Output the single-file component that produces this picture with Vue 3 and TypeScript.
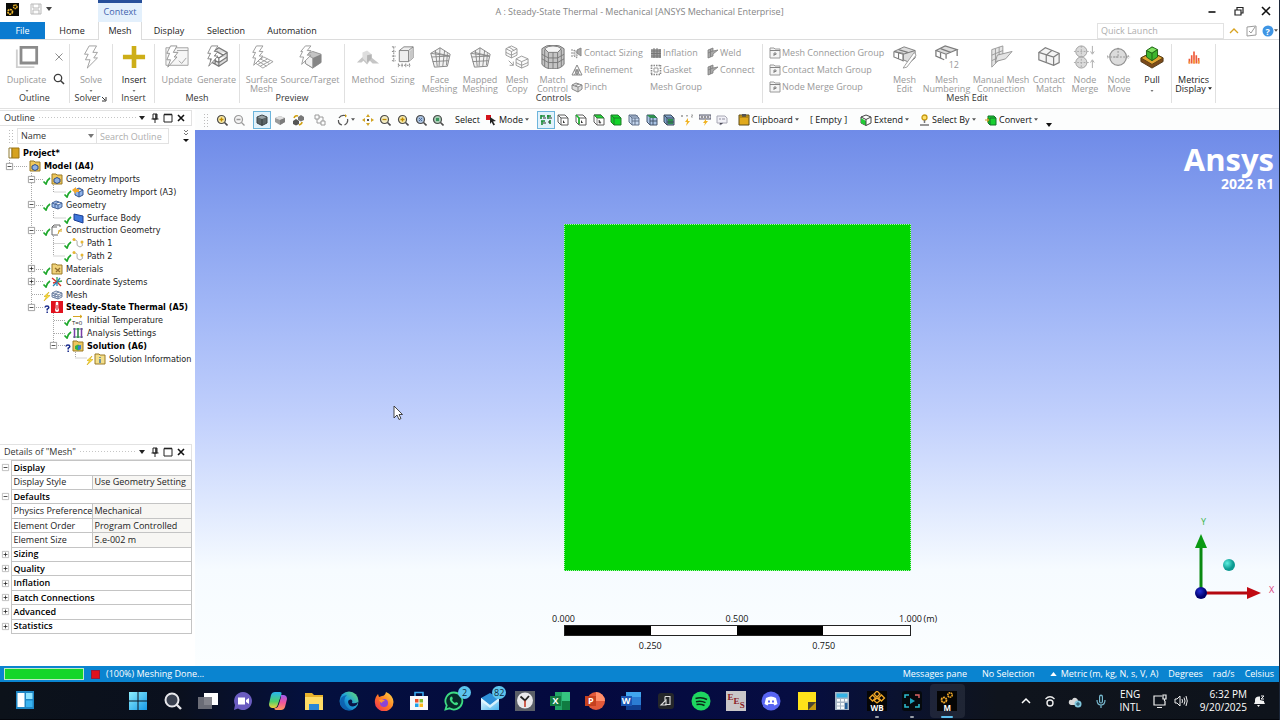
<script setup lang="ts">
import { ref } from 'vue'

interface Tool { label: string; icon: string; live?: boolean; drop?: boolean; mark?: string }
interface TreeRow { label: string; level: number; icon: string; status?: string; open?: string; bold?: boolean; mark?: string }
interface DetailRow { kind: 'group' | 'prop'; name: string; value?: string; open?: boolean }
interface AppItem { name: string; icon: string; badge?: string; run?: string; letter?: string; look?: string }

const tabs = ['Home', 'Mesh', 'Display', 'Selection', 'Automation']
const activeTab = ref('Mesh')

const meshTools: Tool[] = [
  { label: 'Update', icon: 'update' },
  { label: 'Generate', icon: 'generate' },
]
const previewTools: Tool[] = [
  { label: 'Surface\nMesh', icon: 'surface' },
  { label: 'Source/Target', icon: 'srctgt' },
]
const controlTools: Tool[] = [
  { label: 'Method', icon: 'method' },
  { label: 'Sizing', icon: 'sizing' },
  { label: 'Face\nMeshing', icon: 'facemesh' },
  { label: 'Mapped\nMeshing', icon: 'facemesh' },
  { label: 'Mesh\nCopy', icon: 'meshcopy' },
  { label: 'Match\nControl', icon: 'match' },
]
const controlColumns: Tool[][] = [
  [
    { label: 'Contact Sizing', icon: 's-contact' },
    { label: 'Refinement', icon: 's-refine' },
    { label: 'Pinch', icon: 's-pinch' },
  ],
  [
    { label: 'Inflation', icon: 's-inflate' },
    { label: 'Gasket', icon: 's-gasket' },
    { label: 'Mesh Group', icon: '' },
  ],
  [
    { label: 'Weld', icon: 's-weld' },
    { label: 'Connect', icon: 's-weld' },
  ],
]
const groupTools: Tool[] = [
  { label: 'Mesh Connection Group', icon: 's-group' },
  { label: 'Contact Match Group', icon: 's-group' },
  { label: 'Node Merge Group', icon: 's-group' },
]
const editTools: Tool[] = [
  { label: 'Mesh\nEdit', icon: 'meshedit' },
  { label: 'Mesh\nNumbering', icon: 'meshnum', mark: '12' },
  { label: 'Manual Mesh\nConnection', icon: 'manual' },
  { label: 'Contact\nMatch', icon: 'contactmatch' },
  { label: 'Node\nMerge', icon: 'nodemerge' },
  { label: 'Node\nMove', icon: 'nodemove' },
  { label: 'Pull', icon: 'pull', live: true, drop: true },
]

const tree: TreeRow[] = [
  { label: 'Project*', level: 0, icon: 't-project', bold: true },
  { label: 'Model (A4)', level: 1, icon: 't-model', open: 'minus', bold: true },
  { label: 'Geometry Imports', level: 2, icon: 't-model', status: 't-check', open: 'minus' },
  { label: 'Geometry Import (A3)', level: 3, icon: 't-import', status: 't-check' },
  { label: 'Geometry', level: 2, icon: 't-geometry', status: 't-check', open: 'minus' },
  { label: 'Surface Body', level: 3, icon: 't-surface', status: 't-check' },
  { label: 'Construction Geometry', level: 2, icon: 't-construct', status: 't-check', open: 'minus' },
  { label: 'Path 1', level: 3, icon: 't-path', status: 't-check' },
  { label: 'Path 2', level: 3, icon: 't-path', status: 't-check' },
  { label: 'Materials', level: 2, icon: 't-materials', status: 't-check', open: 'plus' },
  { label: 'Coordinate Systems', level: 2, icon: 't-coords', status: 't-check', open: 'plus' },
  { label: 'Mesh', level: 2, icon: 't-mesh', status: 't-bolt' },
  { label: 'Steady-State Thermal (A5)', level: 2, icon: 't-thermal', status: 't-question', open: 'minus', bold: true },
  { label: 'Initial Temperature', level: 3, icon: 't-initial', status: 't-check', mark: 'T=0' },
  { label: 'Analysis Settings', level: 3, icon: 't-settings', status: 't-check' },
  { label: 'Solution (A6)', level: 3, icon: 't-solution', status: 't-question', open: 'minus', bold: true },
  { label: 'Solution Information', level: 4, icon: 't-info', status: 't-bolt' },
]

const details: DetailRow[] = [
  { kind: 'group', name: 'Display', open: true },
  { kind: 'prop', name: 'Display Style', value: 'Use Geometry Setting' },
  { kind: 'group', name: 'Defaults', open: true },
  { kind: 'prop', name: 'Physics Preference', value: 'Mechanical' },
  { kind: 'prop', name: 'Element Order', value: 'Program Controlled' },
  { kind: 'prop', name: 'Element Size', value: '5.e-002 m' },
  { kind: 'group', name: 'Sizing' },
  { kind: 'group', name: 'Quality' },
  { kind: 'group', name: 'Inflation' },
  { kind: 'group', name: 'Batch Connections' },
  { kind: 'group', name: 'Advanced' },
  { kind: 'group', name: 'Statistics' },
]

const shading = [
  { name: 'Shaded with edges', icon: 'v-cube-dark', on: true },
  { name: 'Shaded', icon: 'v-cube-grey', on: false },
  { name: 'Views', icon: 'v-views', on: false },
]
const zooms = [
  { name: 'Pan', icon: 'v-pan' },
  { name: 'Zoom', icon: 'v-zoom' },
  { name: 'Box zoom', icon: 'v-zoomin' },
  { name: 'Zoom to fit', icon: 'v-zoomfit' },
  { name: 'Zoom to selection', icon: 'v-zoomsel' },
]
const filters = [
  { name: 'Smart select', icon: 'v-smart', on: true },
  { name: 'Vertex', icon: 'v-vertex', on: false },
  { name: 'Edge', icon: 'v-edge', on: false },
  { name: 'Face', icon: 'v-face', on: false },
  { name: 'Body', icon: 'v-body', on: false },
  { name: 'Node', icon: 'v-node', on: false },
  { name: 'Element face', icon: 'v-elface', on: false },
  { name: 'Element', icon: 'v-element', on: false },
  { name: 'Coordinates', icon: 'v-xyz', on: false },
  { name: 'Probe', icon: 'v-probe', on: false },
  { name: 'Annotation', icon: 'v-label', on: false },
]

const apps: AppItem[] = [
  { name: 'Start', icon: 'a-start' }, { name: 'Search', icon: 'a-search' },
  { name: 'Task view', icon: 'a-tasks' }, { name: 'Chat', icon: 'a-chat' },
  { name: 'Copilot', icon: 'a-copilot' }, { name: 'File Explorer', icon: 'a-folder' },
  { name: 'Edge', icon: 'a-edge' }, { name: 'Firefox', icon: 'a-firefox' },
  { name: 'Store', icon: 'a-store' }, { name: 'WhatsApp', icon: 'a-whatsapp', badge: '2' },
  { name: 'Mail', icon: 'a-mail', badge: '82' }, { name: 'Clock', icon: 'a-clock' },
  { name: 'Excel', icon: 'a-excel', letter: 'X', look: 'office' },
  { name: 'PowerPoint', icon: 'a-ppt', letter: 'P', look: 'office' },
  { name: 'Word', icon: 'a-word', letter: 'W', look: 'office' },
  { name: 'Inventor', icon: 'a-dark' },
  { name: 'Spotify', icon: 'a-spotify' },
  { name: 'EES', icon: 'a-ees', letter: 'EES', look: 'stairs' },
  { name: 'Discord', icon: 'a-discord' }, { name: 'Sticky Notes', icon: 'a-sticky' },
  { name: 'Calculator', icon: 'a-calc' },
  { name: 'Workbench', icon: 'a-wb', run: 'idle', letter: 'WB', look: 'foot' },
  { name: 'Recorder', icon: 'a-rec', run: 'idle' },
  { name: 'Mechanical', icon: 'a-mech', run: 'current', letter: 'M', look: 'foot' },
]
</script>

<template>
  <div class="desktop">
    <svg class="sprite" aria-hidden="true">
      <defs>
        <radialGradient id="gBlue" cx=".4" cy=".35"><stop offset="0" stop-color="#2430d8" /><stop offset="1" stop-color="#00006c" /></radialGradient>
        <radialGradient id="gTeal" cx=".35" cy=".35"><stop offset="0" stop-color="#5ff0e0" /><stop offset="1" stop-color="#0c9a92" /></radialGradient>
        <linearGradient id="gWin" x1="0" y1="0" x2="1" y2="1"><stop offset="0" stop-color="#8ff0ff" /><stop offset="1" stop-color="#1598e6" /></linearGradient>
        <linearGradient id="gEdge" x1="0" y1="1" x2="1" y2="0"><stop offset="0" stop-color="#0c59a4" /><stop offset=".5" stop-color="#1ea0dc" /><stop offset="1" stop-color="#6be06a" /></linearGradient>
        <linearGradient id="gFox" x1="1" y1="0" x2="0" y2="1"><stop offset="0" stop-color="#ffe14a" /><stop offset=".5" stop-color="#ff7b22" /><stop offset="1" stop-color="#f0255c" /></linearGradient>
        <linearGradient id="gMail" x1="0" y1="0" x2="1" y2="1"><stop offset="0" stop-color="#f2fbff" /><stop offset="1" stop-color="#48b4ee" /></linearGradient>
        <linearGradient id="gCopL" x1="0" y1="0" x2="0" y2="1"><stop offset="0" stop-color="#27b6f0" /><stop offset=".6" stop-color="#4fd06a" /><stop offset="1" stop-color="#f5d13a" /></linearGradient>
        <linearGradient id="gCopR" x1="0" y1="0" x2="0" y2="1"><stop offset="0" stop-color="#9b5cf0" /><stop offset=".5" stop-color="#f0569c" /><stop offset="1" stop-color="#ff9a5a" /></linearGradient>
      </defs>

      <symbol id="duplicate" viewBox="0 0 26 26"><path d="M2 5v19h19" fill="none" stroke="#cfcfcf" stroke-width="2" /><path d="M6.500 2.500h17v17h-17z" fill="#fff" stroke="#8b8b8b" stroke-width="3" /></symbol>
      <symbol id="bolt" viewBox="0 0 26 26"><path d="M11 1h8l-4 7h5l-4 6h4L9 25l3-9H7l3-6H6z" fill="#fff" stroke="#9c9c9c" /></symbol>
      <symbol id="insert" viewBox="0 0 26 26"><path d="M10.500 1h5v9.500H25v5h-9.500V25h-5v-9.500H1v-5h9.500z" fill="#cdae18" /></symbol>
      <symbol id="update" viewBox="0 0 26 26"><path d="M1 3h24v19H1z" fill="#f6f6f6" stroke="#a0a0a0" /><path d="M13 6h12M15 17l3 3 5-6" fill="none" stroke="#a0a0a0" /><path d="M6 1h7L9 8h5l-4 5h3L3 24l3-8H2l3-7H2z" fill="#fff" stroke="#909090" /></symbol>
      <symbol id="generate" viewBox="0 0 26 26"><path d="M6 9l9-6 9 5v9l-9 6-9-5zM6 9l9 5 9-6M15 14v9M10 6l10 5M6 14l9 5 9-6M11 11v9" fill="#ddd" stroke="#777" stroke-width="1.300" /><path d="M7 1h7l-4 6h4l-4 5h4L4 23l3-8H3l3-6H3z" fill="#fff" stroke="#858585" /></symbol>
      <symbol id="surface" viewBox="0 0 26 26"><path d="M5 19l10-6 10 5-11 7zM8 17l10 6M11 15l10 5M8.500 21L19 15M11 23l11-6" fill="#fff" stroke="#9c9c9c" /><path d="M7 1h7l-4 6h4l-4 5h4L4 22l2-8H3l3-6H3z" fill="#fff" stroke="#989898" /></symbol>
      <symbol id="srctgt" viewBox="0 0 26 26"><path d="M8 10l8-3 9 3v9l-9 6-8-5z" fill="#c4c4c4" stroke="#8f8f8f" /><path d="M16 14l9-4v9l-9 6z" fill="#858585" /><path d="M8 10l8 4v11l-8-5z" fill="#f1f1f1" stroke="#8f8f8f" /><path d="M8 1h6l-4 5h4l-4 5h4L4 21l2-8H2l3-6H3z" fill="#fff" stroke="#989898" /></symbol>
      <symbol id="method" viewBox="0 0 26 26"><path d="M1 19l6-6 5 5 4-5 9 7h-7l-3-3-3 4-4-4-2 2z" fill="#c6c6c6" /><path d="M7 8l5-2 5 4v5l-5 4-5-5z" fill="#dedede" /><path d="M12 11l5-1v5l-5 4z" fill="#b4b4b4" /></symbol>
      <symbol id="sizing" viewBox="0 0 26 26"><path d="M9 6l5-4h10v12l-5 4H9z" fill="#eee" stroke="#808080" /><path d="M20 7l4-4v11l-4 3z" fill="#c8c8c8" /><path d="M9 6h10v12M19 6l5-4" fill="none" stroke="#808080" /><path d="M3 2v16M1 2h4M1 7h4M1 12h4M1 17h4M8 22h13M8 20v4M12 20v4M16 20v4M20 20v4" fill="none" stroke="#808080" stroke-dasharray="2 1" /></symbol>
      <symbol id="facemesh" viewBox="0 0 26 26"><path d="M13 3l11 7-3 13-14 1L3 9z" fill="#f2f2f2" stroke="#808080" /><path d="M4 13l19-1M5 18l17-1M7 8l16 4M13 3l-1 20M8 6l2 17M18 6l-2 17M21 9l-1 13M3 9l20 3" fill="none" stroke="#888" /></symbol>
      <symbol id="meshcopy" viewBox="0 0 26 26"><g fill="#fafafa" stroke="#989898"><path d="M1 4l6-3 6 3v7l-6 3-6-3zM1 4l6 3 6-3M7 7v7M1 8l6 3 6-3M4 2l6 4" /><path d="M12 15l6-3 7 3v7l-7 3-6-3zM12 15l6 3 7-3M18 18v7M12 19l6 3 7-3" /><path d="M4 17l5 5M9 18v4H5" fill="none" /></g></symbol>
      <symbol id="match" viewBox="0 0 26 26"><path d="M1 4q4-4 12-4t12 4v17q-4 5-12 5T1 21z" fill="#c4c4c4" stroke="#6e6e6e" /><path d="M4 4q3-3 9-3t9 3l-4 4H8z" fill="#f5f5f5" stroke="#777" /><path d="M8 8v17M18 8v17M13 8v18M4 5v18M22 5v18M1 10l7 4h10l7-4M1 15l7 4h10l7-4" fill="none" stroke="#777" /></symbol>
      <symbol id="meshedit" viewBox="0 0 26 26"><path d="M1 7l11-5 12 4v8l-6 5-7-3V9z" fill="#ddd" stroke="#7c7c7c" /><path d="M1 7l10 3 13-4M11 10v8M1 7v6l10 4M6 5l10 3M6 8v7" fill="none" stroke="#7c7c7c" stroke-width="1.200" /><path d="M23 8L13 22l-2 3 4-1L25 11z" fill="#fff" stroke="#9a9a9a" /></symbol>
      <symbol id="meshnum" viewBox="0 0 26 26"><path d="M1 6l10-5 13 4-12 5z" fill="#ddd" stroke="#7c7c7c" stroke-width="1.200" /><path d="M1 6v6l9 4M6 8v6M12 10v5M24 5v7M6 4l11 4" fill="none" stroke="#7c7c7c" stroke-width="1.400" /></symbol>
      <symbol id="manual" viewBox="0 0 26 26"><path d="M3 5l12-4v11L3 24zM3 11l12-5M3 17l12-6M7 4v16M11 2v14" fill="#e4e4e4" stroke="#989898" /><path d="M9 11l16-4-7 8-11 3z" fill="#e4e4e4" stroke="#939393" /></symbol>
      <symbol id="contactmatch" viewBox="0 0 26 26"><path d="M2 8l7-5 15 6v10l-6 3-16-6z" fill="#f4f4f4" stroke="#7f7f7f" stroke-width="1.300" /><path d="M2 8l16 5 6-4M18 13v9M10 11v8M10 11l6-5" fill="none" stroke="#7f7f7f" stroke-width="1.300" /></symbol>
      <symbol id="nodemerge" viewBox="0 0 26 26"><g fill="#dadada" stroke="#9c9c9c"><circle cx="9" cy="7" r="6" /><circle cx="9" cy="19" r="6" /></g><path d="M1 7h16M1 19h16M9 1v24" stroke="#a8a8a8" stroke-dasharray="2 1.500" /><path d="M21 1v8M19 7l2 3 2-3M21 25v-8M19 19l2-3 2 3" fill="none" stroke="#a8a8a8" /></symbol>
      <symbol id="nodemove" viewBox="0 0 26 26"><circle cx="12" cy="13" r="9" fill="#dcdcdc" stroke="#8f8f8f" stroke-width="1.300" /><path d="M0 13h25M12 3v10h-5M23 11v4M0 11v4" fill="none" stroke="#8f8f8f" stroke-dasharray="2 1.500" /></symbol>
      <symbol id="pull" viewBox="0 0 26 26"><path d="M1 14l12-6 12 6v4l-12 7-12-7z" fill="#7c4a1a" stroke="#4b3312" /><path d="M1 14l12-6 12 6-12 7z" fill="#e0a532" stroke="#5a3d10" /><path d="M7 6l6-4 6 3v8l-6 4-6-4z" fill="#3eb52e" stroke="#205c16" /><path d="M8 6l5-3 5 2-5 3z" fill="#82e063" /><path d="M7 6l6 3 6-4M13 9v8" fill="none" stroke="#205c16" /></symbol>
      <symbol id="metrics" viewBox="0 0 26 26"><path d="M8 20v-5M10.500 20v-9M13 20V7M15.500 20v-9M18 20v-6" stroke="#ee5a3a" stroke-width="1.800" /><path d="M8 20v-2M13 20v-4M18 20v-3" stroke="#f3a13c" stroke-width="1.800" /></symbol>

      <symbol id="s-contact" viewBox="0 0 12 12"><path d="M1 2v8M3 3l3 2v6l-3-2z" fill="#ddd" stroke="#8c8c8c" stroke-dasharray="2 1" /><path d="M6 3l4-2v8l-4-3z" fill="#aaa" stroke="#888" /></symbol>
      <symbol id="s-refine" viewBox="0 0 12 12"><path d="M6 1l5 10H1zM6 5v6M3.500 6L6 11 8.500 6zM3.500 11L6 6l2.500 5" fill="none" stroke="#888" /></symbol>
      <symbol id="s-pinch" viewBox="0 0 12 12"><path d="M1 4l4-2 6 2v4l-4 3-6-3zM1 4l6 2 4-2M7 6v5M4 5l4-2" fill="#ddd" stroke="#888" /></symbol>
      <symbol id="s-inflate" viewBox="0 0 12 12"><path d="M1 2h10v9H1z" fill="#a4a4a4" /><path d="M1 4h10M1 6.500h10M1 9h10M4 1v10M7 1v10M10 2v9" stroke="#777" /></symbol>
      <symbol id="s-gasket" viewBox="0 0 12 12"><path d="M1 1.500h10M1 10.500h10M1.500 1v10M10.500 1v10" stroke="#888" stroke-width="1.600" stroke-dasharray="1.500 1" /><path d="M4 4h4v4H4z" fill="none" stroke="#999" /></symbol>
      <symbol id="s-weld" viewBox="0 0 12 12"><path d="M1 3l5-2v3l5-1-5 4v2l-5 2z" fill="#a8a8a8" stroke="#7e7e7e" stroke-width=".8" /><path d="M1 6l5-2M3.500 2v8" stroke="#7e7e7e" stroke-width=".8" /></symbol>
      <symbol id="s-group" viewBox="0 0 12 12"><path d="M1 3V1h4l1 1h5v9H1z" fill="#f5f5f5" stroke="#9a9a9a" /><path d="M1 3.500h10M5 9V6h2v1.500H5" fill="none" stroke="#858585" /></symbol>
      <symbol id="s-cross" viewBox="0 0 12 12"><path d="M2.500 2.500l7 7M9.500 2.500l-7 7" stroke="#8f8f8f" /></symbol>
      <symbol id="s-search" viewBox="0 0 12 12"><circle cx="5" cy="5" r="3.700" fill="none" stroke="#3d3d3d" stroke-width="1.300" /><path d="M7.700 7.700L11 11" stroke="#3d3d3d" stroke-width="1.600" /></symbol>

      <symbol id="caret" viewBox="0 0 6 4"><path d="M0 0h6L3 4z" fill="currentColor" /></symbol>
      <symbol id="pin" viewBox="0 0 10 10"><path d="M3 1h4v5H3zM1.500 6h7M5 6v4" fill="none" stroke="#222" /><path d="M6 1v5" stroke="#222" stroke-width="1.600" /></symbol>
      <symbol id="max" viewBox="0 0 10 10"><path d="M1 1.500h8v7.500H1z" fill="none" stroke="#222" /><path d="M1 1.500h8" stroke="#222" stroke-width="1.600" /></symbol>
      <symbol id="close" viewBox="0 0 10 10"><path d="M2 2l6 6M8 2L2 8" stroke="#111" stroke-width="1.600" /></symbol>
      <symbol id="gears" viewBox="0 0 14 14"><path d="M0 0h14v14H0z" fill="#0a0a06" /><circle cx="4.500" cy="9.500" r="2.500" fill="none" stroke="#f0b92c" stroke-width="1.800" stroke-dasharray="2 .6" /><circle cx="10" cy="4" r="1.900" fill="none" stroke="#f0b92c" stroke-width="1.600" stroke-dasharray="1.500 .5" /></symbol>
      <symbol id="save" viewBox="0 0 12 12"><path d="M1 1h10v10H1zM3 1v4h6V1M3 11V7h6v4" fill="#fbfbfb" stroke="#b9b9b9" /></symbol>

      <symbol id="t-check" viewBox="0 0 9 10"><path d="M1.500 6.500L4 9q1-4 4-6" fill="none" stroke="#1fa82c" stroke-width="1.700" /></symbol>
      <symbol id="t-bolt" viewBox="0 0 9 10"><path d="M7 1L2 5.500h2.500L2 10l6-5.500H5z" fill="#ffe23a" stroke="#d2aa10" stroke-width=".6" /></symbol>
      <symbol id="t-question" viewBox="0 0 9 10"><path d="M3 4.500q.2-1.500 2-1.500t1.800 1.500q0 .8-1.600 1.700v1.200M5.200 8.500V10" fill="none" stroke="#1a2c8c" stroke-width="1.500" /></symbol>
      <symbol id="t-project" viewBox="0 0 12 12"><path d="M1 1h3v10H1z" fill="#fff" stroke="#8f7a33" /><path d="M4 1h7v10H4z" fill="#d6a21f" stroke="#9c7413" /></symbol>
      <symbol id="t-model" viewBox="0 0 12 12"><path d="M1 1h4l1 1h5v9H1z" fill="#eec75c" stroke="#9a7a26" /><path d="M3 6l3-1.500L9 6v3l-3 1.500L3 9z" fill="#8fb1e4" stroke="#2f4d86" /></symbol>
      <symbol id="t-import" viewBox="0 0 12 12"><path d="M3 4l4-2 4 2v5l-4 2-4-2zM3 4l4 2 4-2M7 6v5" fill="#8fb3ea" stroke="#34548e" /><path d="M0 4l4-3v2h3v3H4v2z" fill="#f2a92e" /></symbol>
      <symbol id="t-geometry" viewBox="0 0 12 12"><path d="M1 4l4-2 6 2v4l-4 2-6-2zM1 4l6 2 4-2M7 6v4M4 5l4-2M4 5v4" fill="#9cbcec" stroke="#3c5b93" stroke-width=".9" /></symbol>
      <symbol id="t-surface" viewBox="0 0 12 12"><path d="M2 2l9 2v7L2 8z" fill="#3f78dc" stroke="#1a3d92" /></symbol>
      <symbol id="t-construct" viewBox="0 0 12 12"><path d="M1 3l2-2h6v2M1 3v8h6M1 3h5" fill="none" stroke="#666" /><path d="M7 10q1-5 4-5M7 7h4" fill="none" stroke="#d5a520" /></symbol>
      <symbol id="t-path" viewBox="0 0 12 12"><path d="M2 3q4 0 3 3t3 4q4-1 2-4" fill="none" stroke="#aaa" /><circle cx="2" cy="2.500" r="1.500" fill="#e6b735" /><circle cx="10" cy="5" r="1.500" fill="#e6b735" /></symbol>
      <symbol id="t-materials" viewBox="0 0 12 12"><path d="M1 1h4l1 1h5v9H1z" fill="#f0d27a" stroke="#9a7a26" /><path d="M4 5l5 4M9 5L5 9" stroke="#927030" stroke-width="1.300" /></symbol>
      <symbol id="t-coords" viewBox="0 0 12 12"><path d="M6 6V1M6 6l5-1" stroke="#37a047" stroke-width="1.300" /><path d="M6 6L1 2M6 6l4 4M2 7l4-1" stroke="#d8332c" stroke-width="1.300" /><path d="M6 6l-4 4M6 6v4M6 6l3-4" stroke="#2787b8" stroke-width="1.300" /></symbol>
      <symbol id="t-mesh" viewBox="0 0 12 12"><path d="M1 4l4-2 6 2v4l-4 2-6-2zM1 4l6 2 4-2M7 6v4M4 5l4-2M4 5v4M1 6l6 2 4-2" fill="#dfe7f2" stroke="#62779a" stroke-width=".9" /></symbol>
      <symbol id="t-thermal" viewBox="0 0 12 12"><path d="M0 0h12v12H0z" fill="#e0121e" /><path d="M6 2v6" stroke="#fff" stroke-width="2.600" stroke-linecap="round" /><circle cx="6" cy="9" r="2" fill="#fff" /><path d="M6 4v5" stroke="#c00010" /></symbol>
      <symbol id="t-initial" viewBox="0 0 12 12"><path d="M1 2.500h9M8 1l2 1.500L8 4" fill="none" stroke="#d5a520" /></symbol>
      <symbol id="t-settings" viewBox="0 0 12 12"><path d="M1 2h10M1 10h10" stroke="#2f9e50" /><path d="M2.500 1v10M9.500 1v10" stroke="#7a3fa8" stroke-width="1.500" /><path d="M6 1v10" stroke="#267b3e" stroke-width="1.500" /></symbol>
      <symbol id="t-solution" viewBox="0 0 12 12"><path d="M1 1h4l1 1h5v9H1z" fill="#eec75c" stroke="#9a7a26" /><path d="M3 6l3-1.500L9 6v3l-3 1.500L3 9z" fill="#2fb04a" /><path d="M6 6l3-1v4l-3 1z" fill="#3678d4" /></symbol>
      <symbol id="t-info" viewBox="0 0 12 12"><path d="M1 1h4l1 1h5v9H1z" fill="#f4df8a" stroke="#9a7a26" /><path d="M6 4v1M6 6v4" stroke="#2c6db0" stroke-width="1.300" /></symbol>

      <symbol id="v-zoom" viewBox="0 0 12 12"><circle cx="5.500" cy="5.500" r="4" fill="#f3ecc2" stroke="#4c4c4c" stroke-width="1.200" /><path d="M3.500 5.500h4" stroke="#c08c00" stroke-width="1.300" /><path d="M8.500 8.500l3 3" stroke="#4c4c4c" stroke-width="1.600" /></symbol>
      <symbol id="v-zoomin" viewBox="0 0 12 12"><circle cx="5.500" cy="5.500" r="4" fill="#f7e9a6" stroke="#4c4c4c" stroke-width="1.200" /><path d="M3.500 5.500h4M5.500 3.500v4" stroke="#c08c00" stroke-width="1.300" /><path d="M8.500 8.500l3 3" stroke="#4c4c4c" stroke-width="1.600" /></symbol>
      <symbol id="v-zoomout" viewBox="0 0 12 12"><circle cx="5.500" cy="5.500" r="4" fill="#f4f4f4" stroke="#9a9a9a" stroke-width="1.200" /><path d="M3.500 5.500h4M8.500 8.500l3 3" stroke="#9a9a9a" stroke-width="1.300" /></symbol>
      <symbol id="v-zoomfit" viewBox="0 0 12 12"><circle cx="5.500" cy="5.500" r="4" fill="#a8bfdc" stroke="#4c4c4c" stroke-width="1.200" /><path d="M4 4l3 3M7 4L4 7" stroke="#4a6c9c" /><path d="M8.500 8.500l3 3" stroke="#4c4c4c" stroke-width="1.600" /></symbol>
      <symbol id="v-zoomsel" viewBox="0 0 12 12"><circle cx="5.500" cy="5.500" r="4" fill="#a8cdb5" stroke="#4c4c4c" stroke-width="1.200" /><path d="M4 4h3v3H4z" fill="#37945a" /><path d="M8.500 8.500l3 3" stroke="#4c4c4c" stroke-width="1.600" /></symbol>
      <symbol id="v-cube-dark" viewBox="0 0 12 12"><path d="M1 3l5-2 5 2v6l-5 2.500L1 9z" fill="#5b6467" stroke="#3c4346" /><path d="M1.500 3.200L6 5l4.500-1.800L6 1.500z" fill="#99a3a6" /><path d="M6 5v6" stroke="#333a3c" /></symbol>
      <symbol id="v-cube-grey" viewBox="0 0 12 12"><path d="M1 4l5-2 5 2v4l-5 3-5-3z" fill="#9a9a9a" /><path d="M1 4l5-2 5 2-5 2z" fill="#dedede" /><path d="M6 6l5-2v4l-5 3z" fill="#7c7c7c" /></symbol>
      <symbol id="v-views" viewBox="0 0 12 12"><path d="M1 7l3-2 3 2v3l-3 1.500L1 10z" fill="#555" /><path d="M6 3l3-2 3 2v3L9 7.500 6 6z" fill="#777" /><path d="M2 4q1-3 4-2M10 8q0 2-3 3" fill="none" stroke="#d0a010" stroke-width="1.500" /></symbol>
      <symbol id="v-tree" viewBox="0 0 12 12"><path d="M1 1h4v4H1zM7 7h4v4H7zM5 3h4v4M3 5v4h4" fill="none" stroke="#9a9a9a" /></symbol>
      <symbol id="v-rotate" viewBox="0 0 12 12"><path d="M2 4q2-3.500 6-2.500M10.500 5q1 4-3 6M5 11Q1 10 1.500 6" fill="none" stroke="#555" stroke-width="1.200" /><path d="M8 0l2 2-2 1.500z" fill="#c99b10" /></symbol>
      <symbol id="v-pan" viewBox="0 0 12 12"><path d="M6 0l2 3H4zM6 12l2-3H4zM0 6l3-2v4zM12 6L9 4v4z" fill="#d2a422" /><path d="M5 5h2v2H5z" fill="#555" /></symbol>
      <symbol id="v-mode" viewBox="0 0 12 12"><path d="M1 1h5v5H1z" fill="#d4141c" /><path d="M5 3l6 4-3 .5 2 3-1.500 1-2-3.500L5 10z" fill="#222" /></symbol>
      <symbol id="v-smart" viewBox="0 0 12 12"><path d="M1 2h4M1 1v4M7 2h4M8 1v4M1 7h4M2 7v4M10 6v4" stroke="#1b8a36" stroke-width="1.600" /><path d="M3 4h3M9 4h3M3 9h3M8 8h2" stroke="#333" stroke-width="1.200" /></symbol>
      <symbol id="v-vertex" viewBox="0 0 12 12"><path d="M1 1h7l3 3v7H4L1 8zM1 1l3 3h7M4 4v7" fill="#fff" stroke="#5c5c5c" /><path d="M6 6v3h2z" fill="#333" /></symbol>
      <symbol id="v-edge" viewBox="0 0 12 12"><path d="M1 1h7l3 3v7H4L1 8zM1 1l3 3h7M4 4v7" fill="#fff" stroke="#5c5c5c" /><path d="M1 1l3 3v6" fill="none" stroke="#18b82c" stroke-width="1.600" /><path d="M6 6v3h2z" fill="#333" /></symbol>
      <symbol id="v-face" viewBox="0 0 12 12"><path d="M1 1h7l3 3v7H4L1 8z" fill="#fff" stroke="#5c5c5c" /><path d="M1 1h7l3 3H4z" fill="#26d43a" stroke="#2c7a35" /><path d="M4 4v7M6 6v3h2z" fill="#333" stroke="#5c5c5c" stroke-width=".7" /></symbol>
      <symbol id="v-body" viewBox="0 0 12 12"><path d="M1 1h7l3 3v7H4L1 8z" fill="#12d42a" stroke="#1f7a2b" /><path d="M1 1l3 3h7M4 4v7" fill="none" stroke="#1f7a2b" /></symbol>
      <symbol id="v-node" viewBox="0 0 12 12"><path d="M1 1h7l3 3v7H4L1 8z" fill="#c4d6ee" stroke="#60708a" /><path d="M1 1l3 3h7M4 4v7M7 4v7M4 7h7M3 2h7" fill="none" stroke="#60708a" /></symbol>
      <symbol id="v-elface" viewBox="0 0 12 12"><path d="M1 1h7l3 3v7H4L1 8z" fill="#a9c4e6" stroke="#44546c" /><path d="M1 1h7l3 3H4z" fill="#2f8f50" /><path d="M4 4v7M7 4v7M4 7h7" fill="none" stroke="#44546c" /></symbol>
      <symbol id="v-element" viewBox="0 0 12 12"><path d="M1 1h7l3 3v7H4L1 8z" fill="#7da0c8" stroke="#3c4c5c" /><path d="M5 5h5v5H5z" fill="#2f8f50" /><path d="M1 1l3 3h7M4 4v7M4 8h7" fill="none" stroke="#3c4c5c" /></symbol>
      <symbol id="v-xyz" viewBox="0 0 12 12"><path d="M0 1l2 2M2 1L0 3M5 1l1 1 1-1M6 2v1M10 1h2l-2 2h2" fill="none" stroke="#999" stroke-width=".8" /><path d="M7 4L4 8h2l-1 4 4-5H7z" fill="#f0b322" /></symbol>
      <symbol id="v-probe" viewBox="0 0 12 12"><path d="M0 1h12v4H0z" fill="#e3e3ea" stroke="#55596a" /><path d="M2 3h2M5 3h2M8 3h2" stroke="#444" /><path d="M7 5L4 9h2l-1 3 4-5H7z" fill="#f0b322" /></symbol>
      <symbol id="v-label" viewBox="0 0 12 12"><path d="M1 2h8l2 2v5H1z" fill="#f0f0f6" stroke="#a8a8b4" /><path d="M3 5h2M6 5h3M4 9v2l3-2" stroke="#8f8fa0" /></symbol>
      <symbol id="v-clip" viewBox="0 0 12 12"><path d="M1 1h10v10H1z" fill="#e0a91c" stroke="#5d4c1a" /><path d="M4 0h4v3H4z" fill="#555" /><path d="M2 3h8" stroke="#8c6a10" /></symbol>
      <symbol id="v-extend" viewBox="0 0 12 12"><path d="M1 3l5-2 5 2v6l-5 2.500L1 9z" fill="#fff" stroke="#444" /><path d="M1 4l5 3v4.500L1 9z" fill="#22cc36" /><path d="M1 3l5 2.500L11 3M6 5.500v6" fill="none" stroke="#444" /></symbol>
      <symbol id="v-selby" viewBox="0 0 12 12"><circle cx="6.500" cy="3.500" r="2.500" fill="#ffe16a" stroke="#c79a12" stroke-width="1.300" /><path d="M6.500 6v3M2 11h9" stroke="#777" stroke-width="1.500" /></symbol>
      <symbol id="v-convert" viewBox="0 0 12 12"><path d="M3 2h6l2 2v7H5L3 9z" fill="#18d030" stroke="#14702a" /><path d="M5 4h6M5 4v7" stroke="#14702a" /><path d="M0 6h4M2 4l2 2-2 2" fill="none" stroke="#c79a12" /></symbol>

      <symbol id="a-widgets" viewBox="0 0 20 20"><path d="M1 1h18v18H1z" fill="#1e86c4" /><path d="M2.500 3h7v14h-7z" fill="#fff" /><path d="M11 3h6.500v6H11z" fill="#8fe4ff" /><path d="M11 10.500h6.500V17H11z" fill="#3ab2ee" /></symbol>
      <symbol id="a-start" viewBox="0 0 20 20"><path d="M1 1h8.500v8.500H1zM10.500 1H19v8.500h-8.500zM1 10.500h8.500V19H1zM10.500 10.500H19V19h-8.500z" fill="url(#gWin)" /></symbol>
      <symbol id="a-search" viewBox="0 0 20 20"><circle cx="9" cy="9" r="6.500" fill="#3a4150" stroke="#e8e8ec" stroke-width="2" /><path d="M13.500 13.500L18 18" stroke="#e8e8ec" stroke-width="2.400" /></symbol>
      <symbol id="a-tasks" viewBox="0 0 20 20"><path d="M6 2h14v12H6z" fill="#fff" /><path d="M0 6h14v12H0z" fill="#757780" opacity=".9" /></symbol>
      <symbol id="a-chat" viewBox="0 0 20 20"><path d="M10 1a9 9 0 1 1-5 16.500L1 19l1-5A9 9 0 0 1 10 1z" fill="#6a5cc0" /><path d="M5 6.500h7v7H5zM13 9l3-2v6l-3-2z" fill="#fff" /></symbol>
      <symbol id="a-copilot" viewBox="0 0 20 20"><path d="M7 1h5q2 0 1.500 2L10 13q-1 4-4 4H4q-3-.5-3-4l2-9q1-3 4-3z" fill="url(#gCopL)" /><path d="M13 4h3q3 .5 3 4l-2 8q-1 3-4 3H8q-2 0-1.500-2H8q2-.5 3-4l2-7z" fill="url(#gCopR)" /></symbol>
      <symbol id="a-folder" viewBox="0 0 20 20"><path d="M1 2h7l2 2h9v15H1z" fill="#e9b22c" /><path d="M1 6h18v13H1z" fill="#ffdc66" /><path d="M5 13h10v6H5z" fill="#2a87d6" /></symbol>
      <symbol id="a-edge" viewBox="0 0 20 20"><circle cx="10" cy="10" r="9.500" fill="url(#gEdge)" /><path d="M1 11q0-6 7-7-4 3-2 9 2 5 7 6-11 2-12-8z" fill="#0b5cae" opacity=".8" /><path d="M9 11q0-3 3-2.500 2 1 1 3.500 3 1 6-1-1 4-5 4.500-4 0-5-4.500z" fill="#0a1446" /></symbol>
      <symbol id="a-firefox" viewBox="0 0 20 20"><path d="M12 1q7 3 7.500 10a9.300 9.300 0 0 1-18.700 0Q1 6 4 3l1 3 3-1q3 0 4-4z" fill="url(#gFox)" /><circle cx="10" cy="12" r="4" fill="#8b44d8" /><path d="M5 9q4-2 6 1-3 0-3 2-2 0-3-3z" fill="#ff9a2a" /></symbol>
      <symbol id="a-store" viewBox="0 0 20 20"><path d="M6 6V1.500h8V6" fill="none" stroke="#38a8ee" stroke-width="1.600" /><path d="M1 5h18v14H1z" fill="#f8f9fb" /><path d="M6 8h3.500v3.500H6z" fill="#f04f2a" /><path d="M10.500 8H14v3.500h-3.500z" fill="#7dba2b" /><path d="M6 12.500h3.500V16H6z" fill="#1ea2ea" /><path d="M10.500 12.500H14V16h-3.500z" fill="#fbb91c" /></symbol>
      <symbol id="a-whatsapp" viewBox="0 0 20 20"><path d="M10 1.500a8.500 8.500 0 1 1-4.500 15.800L1.500 18.500l1.200-4A8.500 8.500 0 0 1 10 1.500z" fill="#062a2a" stroke="#3ddc84" stroke-width="1.800" /><path d="M6.500 6q1.500-1 2 .5l.3 1.500-.8 1q1 2 3 3l1-1 2 1q.6 1-1 2-2 .8-5-2T6 7z" fill="#3ddc84" /></symbol>
      <symbol id="a-mail" viewBox="0 0 20 20"><path d="M1 7h18v12H1z" fill="url(#gMail)" /><path d="M1 7l9-5 9 5-9 7z" fill="#2d8fd8" /><path d="M1 7l9 7 9-7v3l-9 7-9-7z" fill="#e6f7ff" opacity=".8" /></symbol>
      <symbol id="a-clock" viewBox="0 0 20 20"><path d="M0 0h20v20H0z" fill="#5b5f68" /><circle cx="10" cy="9.500" r="8" fill="#e9e9ec" /><path d="M5.500 5.500L10 9.500 14 5" fill="none" stroke="#222" stroke-width="1.800" /><path d="M10 9.500V16" stroke="#c3321f" stroke-width="1.500" /></symbol>
      <symbol id="a-excel" viewBox="0 0 20 20"><path d="M5 1h15v18H5z" fill="#21a366" /><path d="M12 1h8v9h-8z" fill="#35c481" /><path d="M12 10h8v9h-8z" fill="#107c41" /><path d="M0 5h11v10H0z" fill="#127a42" /></symbol>
      <symbol id="a-ppt" viewBox="0 0 20 20"><circle cx="11" cy="10" r="9" fill="#e2593a" /><path d="M11 1a9 9 0 0 1 9 9h-9z" fill="#ff8f6b" /><path d="M0 5h11v10H0z" fill="#c5401f" /></symbol>
      <symbol id="a-word" viewBox="0 0 20 20"><path d="M5 1h15v18H5z" fill="#2b7cd3" /><path d="M5 1h15v5H5z" fill="#41a5ee" /><path d="M5 14h15v5H5z" fill="#103f91" /><path d="M0 5h11v10H0z" fill="#1a56b4" /></symbol>
      <symbol id="a-dark" viewBox="0 0 20 20"><rect x="2" y="2" width="16" height="16" rx="3" fill="#24262a" /><path d="M9 5.500h5v8H9M9 5.500v5M5 14l5-5v5z" fill="none" stroke="#ddd" stroke-width="1.100" /></symbol>
      <symbol id="a-spotify" viewBox="0 0 20 20"><circle cx="10" cy="10" r="9.500" fill="#1ed760" /><path d="M4.500 7.500q6-2 11.500 1M5 10.700q5-1.500 9.500 1M5.500 13.500q4-1 8 1" fill="none" stroke="#0a2a16" stroke-width="1.500" /></symbol>
      <symbol id="a-ees" viewBox="0 0 20 20"><path d="M0 0h20v20H0z" fill="#c9c6c8" /></symbol>
      <symbol id="a-discord" viewBox="0 0 20 20"><circle cx="10" cy="10" r="9.500" fill="#5865f2" /><path d="M5 7q5-3 10 0l1.500 6-3 1.500-1-1.500H7.500l-1 1.500-3-1.500z" fill="#fff" /><path d="M7 9.500h2v2H7zM11 9.500h2v2h-2z" fill="#5865f2" /></symbol>
      <symbol id="a-sticky" viewBox="0 0 20 20"><path d="M1 1h18v10l-8 8H1z" fill="#ffe21a" /><path d="M19 11v8h-8z" fill="#c59a10" /><path d="M11 11h8l-8 8z" fill="#4b4632" /></symbol>
      <symbol id="a-calc" viewBox="0 0 20 20"><path d="M3 1h14v18H3z" fill="#a4b4c4" /><path d="M4.500 2.500h11v4h-11z" fill="#35b2e6" /><path d="M5 8h3v2.500H5zM9 8h3v2.500H9zM5 12h3v2.500H5zM9 12h3v2.500H9zM5 15.500h3V18H5zM9 15.500h3V18H9zM13 8h2.500v2.500H13z" fill="#f6fafc" /><path d="M13 12h2.500v6H13z" fill="#23609c" /></symbol>
      <symbol id="a-wb" viewBox="0 0 20 20"><path d="M0 0h20v20H0z" fill="#050505" /><path d="M10 0l3 3-3 3-3-3zM5.500 4l3 3-3 3-3-3zM14.500 4l3 3-3 3-3-3zM10 7l3 2.500-3 2.500-3-2.500z" fill="none" stroke="#f0a828" stroke-width="1.300" /></symbol>
      <symbol id="a-rec" viewBox="0 0 20 20"><rect width="20" height="20" rx="3" fill="#05090d" /><path d="M3 7V4h4M17 13v3h-4M7 16H3v-3" fill="none" stroke="#2cb9cc" stroke-width="1.600" /><path d="M8 7l5 3-5 3z" fill="#1fa5c0" /><path d="M13 4h4v3" fill="none" stroke="#d66" stroke-width="1.400" /></symbol>
      <symbol id="a-mech" viewBox="0 0 20 20"><path d="M0 0h20v20H0z" fill="#050505" /><circle cx="7" cy="9" r="2.500" fill="none" stroke="#f0a828" stroke-width="1.800" stroke-dasharray="2 .6" /><circle cx="13" cy="4" r="2.200" fill="none" stroke="#f0a828" stroke-width="1.600" stroke-dasharray="1.500 .5" /></symbol>
    </svg>

    <header class="titlebar">
      <div class="quick">
        <svg class="app-icon"><use href="#gears" /></svg>
        <button class="plain" aria-label="Save"><svg class="i12"><use href="#save" /></svg></button>
        <button class="plain" aria-label="Customize toolbar"><svg class="caret"><use href="#caret" /></svg></button>
        <span class="context">Context</span>
      </div>
      <h1>A : Steady-State Thermal - Mechanical [ANSYS Mechanical Enterprise]</h1>
      <div class="winctl">
        <button class="plain" aria-label="Minimize"><svg class="i12" viewBox="0 0 12 12"><path d="M2.500 7h7" stroke="#111" stroke-width="1.600" /></svg></button>
        <button class="plain" aria-label="Restore"><svg class="i12" viewBox="0 0 12 12"><path d="M2 5h6v5H2zM4 5V2.500h6V8H8" fill="none" stroke="#222" stroke-width="1.200" /></svg></button>
        <button class="plain" aria-label="Close"><svg class="i12" viewBox="0 0 12 12"><path d="M2 2l8 8M10 2l-8 8" stroke="#111" stroke-width="1.600" /></svg></button>
      </div>
    </header>

    <nav class="tabs">
      <button class="file">File</button>
      <div class="tablist">
        <button v-for="t in tabs" :key="t" :class="{ active: t === activeTab }" @click="activeTab = t">{{ t }}</button>
      </div>
      <input class="launch" type="text" placeholder="Quick Launch" aria-label="Quick Launch" />
      <div class="tabtools">
        <button class="plain" aria-label="Collapse ribbon"><svg class="i12" viewBox="0 0 12 12"><path d="M2 8l4-4 4 4" fill="none" stroke="#d8a320" stroke-width="1.300" /></svg></button>
        <button class="plain" aria-label="Feedback"><svg class="i12" viewBox="0 0 12 12"><path d="M2 2l9-1v9l-9 1zM4 6l2 2 4-6" fill="none" stroke="#9a9a9a" /></svg></button>
        <button class="plain help" aria-label="Help"><svg class="i12" viewBox="0 0 12 12"><circle cx="6" cy="6" r="5.500" fill="#3f95e4" /><text x="3.600" y="9.500" font-size="9" font-weight="700" fill="#fff">?</text></svg><svg class="caret small"><use href="#caret" /></svg></button>
      </div>
    </nav>

    <section class="ribbon">
      <div class="rgroup r-outline">
        <div class="tools">
          <button class="big"><svg class="i26"><use href="#duplicate" /></svg><span>Duplicate</span><svg class="mini"><use href="#caret" /></svg></button>
          <div class="pair">
            <button class="plain" aria-label="Delete"><svg class="i12"><use href="#s-cross" /></svg></button>
            <button class="plain" aria-label="Find"><svg class="i12"><use href="#s-search" /></svg></button>
          </div>
        </div>
        <h2>Outline</h2>
      </div>
      <div class="rgroup r-solver">
        <div class="tools"><button class="big"><svg class="i26"><use href="#bolt" /></svg><span>Solve</span><svg class="mini"><use href="#caret" /></svg></button></div>
        <h2>Solver<svg class="launcher" viewBox="0 0 6 6"><path d="M1 1l3 3M5 1v4H1" fill="none" stroke="#333" /></svg></h2>
      </div>
      <div class="rgroup r-insert">
        <div class="tools"><button class="big live"><svg class="i26"><use href="#insert" /></svg><span>Insert</span><svg class="mini"><use href="#caret" /></svg></button></div>
        <h2>Insert</h2>
      </div>
      <div class="rgroup r-mesh">
        <div class="tools">
          <button v-for="c in meshTools" :key="c.label" class="big"><svg class="i26"><use :href="'#' + c.icon" /></svg><span>{{ c.label }}</span></button>
        </div>
        <h2>Mesh</h2>
      </div>
      <div class="rgroup r-preview">
        <div class="tools">
          <button v-for="c in previewTools" :key="c.label" class="big"><svg class="i26"><use :href="'#' + c.icon" /></svg><span>{{ c.label }}</span></button>
        </div>
        <h2>Preview</h2>
      </div>
      <div class="rgroup r-controls">
        <div class="tools">
          <button v-for="c in controlTools" :key="c.label" class="big"><svg class="i26"><use :href="'#' + c.icon" /></svg><span>{{ c.label }}</span></button>
          <div v-for="(col, n) in controlColumns" :key="n" class="stack">
            <button v-for="c in col" :key="c.label" class="row"><svg v-if="c.icon" class="i12"><use :href="'#' + c.icon" /></svg>{{ c.label }}</button>
          </div>
        </div>
        <h2>Controls</h2>
      </div>
      <div class="rgroup r-edit">
        <div class="tools">
          <div class="stack">
            <button v-for="c in groupTools" :key="c.label" class="row"><svg class="i12"><use :href="'#' + c.icon" /></svg>{{ c.label }}</button>
          </div>
          <button v-for="c in editTools" :key="c.label" class="big" :class="{ live: c.live }"><svg class="i26"><use :href="'#' + c.icon" /></svg><i v-if="c.mark" class="mark">{{ c.mark }}</i><span>{{ c.label }}</span><svg v-if="c.drop" class="mini"><use href="#caret" /></svg></button>
        </div>
        <h2>Mesh Edit</h2>
      </div>
      <div class="rgroup r-metrics">
        <div class="tools"><button class="big live"><svg class="i26"><use href="#metrics" /></svg><span>{{ 'Metrics\nDisplay' }}<svg class="caret tail"><use href="#caret" /></svg></span></button></div>
      </div>
    </section>

    <main class="workspace">
      <aside class="dock">
        <section class="panel">
          <div class="phead">
            <h2>Outline</h2><i class="grip"></i>
            <button class="plain" aria-label="Outline menu"><svg class="caret"><use href="#caret" /></svg></button>
            <button class="plain" aria-label="Pin outline"><svg class="i10"><use href="#pin" /></svg></button>
            <button class="plain" aria-label="Maximize outline"><svg class="i10"><use href="#max" /></svg></button>
            <button class="plain" aria-label="Close outline"><svg class="i10"><use href="#close" /></svg></button>
          </div>
          <div class="finder">
            <i class="vgrip"></i>
            <div class="selectwrap">
              <select aria-label="Filter by"><option>Name</option></select>
              <svg class="caret"><use href="#caret" /></svg>
            </div>
            <input type="text" placeholder="Search Outline" aria-label="Search Outline" />
            <button class="plain more" aria-label="More"><svg viewBox="0 0 8 14"><path d="M2 1l2 2 2-2M2 4l2 2 2-2" fill="none" stroke="#777" /><path d="M1 10h6l-3 3z" fill="#111" /></svg></button>
          </div>
          <div class="tree" role="tree">
            <svg class="links" viewBox="0 0 190 218" aria-hidden="true"><path d="M9.500 13v6M14 19.500h14M31.500 26v134M36 32.500h8M36 58.500h8M36 83.500h8M36 122.500h8M36 134.500h8M32 147.500h12M36 160.500h8M53.500 38v7h12M53.500 64v7h12M53.500 89v20h12M53.500 96.500h12M53.500 166v32M54 173.500h12M54 186.500h12M58 198.500h8M75.500 205v6h12" fill="none" stroke="#a8a8a8" stroke-dasharray="1 1" /></svg>
            <div v-for="r in tree" :key="r.label" class="node" :class="['lv' + r.level, { strong: r.bold }]" role="treeitem">
              <button v-if="r.open" class="expander" :aria-label="'Toggle ' + r.label"><svg viewBox="0 0 9 9"><path d="M.5.5h8v8h-8z" fill="#fff" stroke="#8a8a8a" /><path :d="r.open === 'plus' ? 'M2 4.500h5M4.500 2v5' : 'M2 4.500h5'" stroke="#222" /></svg></button>
              <svg v-if="r.status" class="status"><use :href="'#' + r.status" /></svg>
              <svg class="kind"><use :href="'#' + r.icon" /></svg>
              <i v-if="r.mark" class="mark">{{ r.mark }}</i>
              <span>{{ r.label }}</span>
            </div>
          </div>
        </section>

        <section class="panel">
          <div class="phead">
            <h2>Details of "Mesh"</h2><i class="grip"></i>
            <button class="plain" aria-label="Details menu"><svg class="caret"><use href="#caret" /></svg></button>
            <button class="plain" aria-label="Pin details"><svg class="i10"><use href="#pin" /></svg></button>
            <button class="plain" aria-label="Maximize details"><svg class="i10"><use href="#max" /></svg></button>
            <button class="plain" aria-label="Close details"><svg class="i10"><use href="#close" /></svg></button>
          </div>
          <table class="props">
            <colgroup><col class="c-gut" /><col class="c-name" /><col /></colgroup>
            <tbody>
              <tr v-for="d in details" :key="d.name">
                <td class="gut"><button v-if="d.kind === 'group'" class="expander" :aria-label="'Toggle ' + d.name"><svg viewBox="0 0 9 9"><path d="M.5.5h8v8h-8z" fill="#fff" stroke="#b0b0b0" /><path :d="d.open ? 'M2 4.500h5' : 'M2 4.500h5M4.500 2v5'" stroke="#222" /></svg></button></td>
                <th v-if="d.kind === 'group'" colspan="2">{{ d.name }}</th>
                <template v-else><td>{{ d.name }}</td><td class="pvalue">{{ d.value }}</td></template>
              </tr>
            </tbody>
          </table>
        </section>
      </aside>

      <section class="view">
        <div class="viewbar">
          <i class="vgrip"></i>
          <div class="set w-zoom">
            <button aria-label="Zoom in"><svg class="i12"><use href="#v-zoomin" /></svg></button>
            <button aria-label="Zoom out"><svg class="i12"><use href="#v-zoomout" /></svg></button>
          </div>
          <div class="set w-shade">
            <button v-for="s in shading" :key="s.name" :class="{ on: s.on }" :aria-label="s.name"><svg class="i12"><use :href="'#' + s.icon" /></svg></button>
          </div>
          <div class="set w-tree"><button aria-label="Hierarchy"><svg class="i12"><use href="#v-tree" /></svg></button></div>
          <div class="set w-rotate"><button aria-label="Rotate"><svg class="i12"><use href="#v-rotate" /></svg><svg class="caret small"><use href="#caret" /></svg></button></div>
          <div class="set w-zooms">
            <button v-for="s in zooms" :key="s.name" :aria-label="s.name"><svg class="i12"><use :href="'#' + s.icon" /></svg></button>
          </div>
          <span class="set w-select">Select</span>
          <div class="set w-mode"><button class="drop"><svg class="i12"><use href="#v-mode" /></svg>Mode<svg class="caret small"><use href="#caret" /></svg></button></div>
          <div class="set w-filters">
            <button v-for="s in filters" :key="s.name" :class="{ on: s.on }" :aria-label="s.name"><svg class="i12"><use :href="'#' + s.icon" /></svg></button>
          </div>
          <div class="set w-clip"><button class="drop"><svg class="i12"><use href="#v-clip" /></svg>Clipboard<svg class="caret small"><use href="#caret" /></svg></button></div>
          <span class="set w-empty">[ Empty ]</span>
          <div class="set w-extend"><button class="drop"><svg class="i12"><use href="#v-extend" /></svg>Extend<svg class="caret small"><use href="#caret" /></svg></button></div>
          <div class="set w-selby"><button class="drop"><svg class="i12"><use href="#v-selby" /></svg>Select By<svg class="caret small"><use href="#caret" /></svg></button></div>
          <div class="set w-convert"><button class="drop"><svg class="i12"><use href="#v-convert" /></svg>Convert<svg class="caret small"><use href="#caret" /></svg></button></div>
          <button class="plain overflow" aria-label="More tools"><svg class="caret"><use href="#caret" /></svg></button>
        </div>

        <div class="canvas">
          <div class="plate"></div>
          <div class="scale">
            <div class="ticks ends"><span>0.000</span><span>0.500</span><span>1.000</span><em>(m)</em></div>
            <div class="ruler"><b></b><i></i><b></b><i></i></div>
            <div class="ticks mids"><span>0.250</span><span>0.750</span></div>
          </div>
          <div class="brand"><strong>Ansys</strong><span>2022 R1</span></div>
          <svg class="triad" viewBox="0 0 90 90" role="img" aria-label="Axis triad">
            <path d="M11 78V30" stroke="#0a8a12" stroke-width="3" /><path d="M11 19l6 14H5z" fill="#0a9a14" />
            <path d="M11 78h48" stroke="#b40810" stroke-width="3" /><path d="M71 78l-14 6V72z" fill="#c00a12" />
            <circle cx="11" cy="78" r="6" fill="url(#gBlue)" /><circle cx="39" cy="50" r="6" fill="url(#gTeal)" />
            <text x="11" y="10" font-size="9" fill="#3cb84a">Y</text><text x="79" y="78" font-size="9" fill="#d83a78">X</text>
          </svg>
          <svg class="cursor" viewBox="0 0 10 16" aria-hidden="true"><path d="M1 1v12l3-3 2 4.500 2-1L6 9.500h3.500z" fill="#fff" stroke="#333" stroke-width=".9" /></svg>
        </div>
      </section>
    </main>

    <footer class="statusbar">
      <div class="progress"></div>
      <button class="stop" aria-label="Stop"></button>
      <span class="msg">(100%) Meshing Done...</span>
      <span class="right">
        <span class="wide">Messages pane</span><span class="wide">No Selection</span>
        <span class="units"><svg viewBox="0 0 8 5"><path d="M0 5h8L4 0z" fill="#fff" /></svg>Metric (m, kg, N, s, V, A)</span>
        <span>Degrees</span><span>rad/s</span><span>Celsius</span>
      </span>
    </footer>

    <div class="taskbar">
      <div class="widgets"><button aria-label="Widgets"><svg class="i20"><use href="#a-widgets" /></svg></button></div>
      <div class="apps">
        <button v-for="a in apps" :key="a.name" :aria-label="a.name" :class="a.run">
          <svg class="i20"><use :href="'#' + a.icon" /></svg>
          <span v-if="a.letter" class="letter" :class="a.look"><b v-for="(ch, n) in a.letter" :key="n">{{ ch }}</b></span>
          <span v-if="a.badge" class="badge">{{ a.badge }}</span>
        </button>
      </div>
      <div class="tray">
        <svg class="i12" viewBox="0 0 12 12"><path d="M2 8l4-4 4 4" fill="none" stroke="#fff" stroke-width="1.500" /></svg>
        <svg class="i12" viewBox="0 0 12 12"><circle cx="6" cy="8" r="3" fill="none" stroke="#eee" stroke-width="1.400" /><path d="M1.500 4Q6-.5 10.500 4" fill="none" stroke="#eee" stroke-width="1.300" /></svg>
        <svg class="i14" viewBox="0 0 14 14"><path d="M3 11q-3-1-2-4 1-2 3-1 1-3 4-2 2 1 2 3 3 0 3 2.500Q13 11 11 11z" fill="#d8d8d8" /><circle cx="10" cy="10" r="3.500" fill="#7fc6dc" /><path d="M8 10h4M10 8v4" stroke="#204a60" /></svg>
        <svg class="i14" viewBox="0 0 14 14"><path d="M7 2.500v5" stroke="#79b9cf" stroke-width="4" stroke-linecap="round" /><path d="M7 3v4.500" stroke="#10242c" stroke-width="1.800" stroke-linecap="round" /><path d="M3 6q0 5 4 5t4-5M7 11v3" fill="none" stroke="#79b9cf" stroke-width="1.200" /></svg>
        <span class="lang">ENG<br />INTL</span>
        <svg class="i14" viewBox="0 0 14 14"><path d="M9 2H1v9h11V7M4 13.500h5M10 1h3v4h-3zM11.500 5v2" fill="none" stroke="#eee" stroke-width="1.200" /></svg>
        <svg class="i14 sound" viewBox="0 0 14 14"><path d="M1 5h2l3-3v10L3 9H1z" fill="none" stroke="#eee" /><path d="M8 5q1 2 0 4M10 3.500q2 3.500 0 7M12 2q2.500 5 0 10" fill="none" stroke="#eee" /></svg>
        <span class="clock">6:32 PM<br />9/20/2025</span>
        <svg class="i12 bell" viewBox="0 0 12 12"><path d="M1 9l1-2V5q0-3.500 4-3.500h1V5l4 1v1l1 2zM4 10h3l-1.500 2z" fill="#f0f0f0" /><path d="M8 1h3L8 4h3" fill="none" stroke="#f0f0f0" /></svg>
      </div>
    </div>
  </div>
</template>

<style>
html, body { margin: 0; background: #fff; }
</style>

<style scoped>
* { box-sizing: border-box; }
.desktop { min-height: 100vh; display: flex; flex-direction: column; background: #fff; color: #222; font: 9px/10px "Open Sans", "Noto Sans", sans-serif; border-right: 1px solid #1b2638; }
.sprite { position: absolute; width: 0; height: 0; }
h1, h2 { margin: 0; font: inherit; }
button { margin: 0; padding: 0; border: 0; background: none; color: inherit; font: inherit; }
input, select { margin: 0; font: inherit; color: inherit; border-radius: 0; min-width: 0; }
input::placeholder { color: #aeaeae; opacity: 1; }
svg { flex: none; display: block; overflow: visible; }
.i10 { width: 10px; height: 10px; }
.i12 { width: 12px; height: 12px; }
.i14 { width: 14px; height: 14px; }
.i20 { width: 20px; height: 20px; }
.i26 { width: 24px; height: 24px; }
.caret { width: 6px; height: 4px; }
.caret.small { width: 4px; height: 3px; color: #555; }
.plain { display: flex; align-items: center; justify-content: center; }

.titlebar { height: 22px; flex: none; display: grid; grid-template-columns: 1fr auto 1fr; align-items: center; }
.titlebar h1 { color: #858585; padding-top: 2px; }
.quick { height: 22px; display: flex; align-items: center; padding: 0 0 4px 6px; }
.app-icon { width: 13px; height: 13px; margin-right: 11px; }
.quick .plain { margin-right: 4px; }
.quick .plain:nth-of-type(2) { margin-right: 46px; }
.quick .caret { color: #444; }
.context { align-self: start; width: 44px; height: 22px; border-top: 3px solid #27509b; background: #e3f0fc; color: #3f62ad; text-align: center; line-height: 18px; }
.winctl { display: flex; justify-content: flex-end; gap: 15px; padding-right: 7px; }

.tabs { height: 18px; flex: none; display: flex; align-items: center; border-bottom: 1px solid #dcdcdc; }
.tabs .file { align-self: stretch; width: 45px; background: #0b7bd0; color: #fff; }
.tablist { align-self: stretch; display: grid; grid-template-columns: 52px 44px 54px 60px 72px; margin: 0 auto 0 1px; }
.tablist button { height: 18px; color: #222; }
.tablist .active { background: #fff; border: 1px solid #dcdcdc; border-width: 0 1px; }
.launch { width: 127px; height: 16px; border: 1px solid #e2e2e2; padding: 0 3px; background: #fff; }
.tabtools { display: flex; gap: 5px; padding: 0 1px 0 4px; }

.ribbon { height: 69px; flex: none; display: flex; padding-top: 4px; border-bottom: 1px solid #e1e1e1; }
.rgroup { height: 59px; flex: none; display: flex; flex-direction: column; border-right: 1px solid #e0e0e0; }
.rgroup h2 { display: flex; justify-content: center; align-items: center; margin-top: auto; color: #333; white-space: pre; }
.launcher { width: 6px; height: 6px; margin: 2px 0 0 1px; }
.tools { display: grid; grid-auto-flow: column; justify-content: start; height: 48px; }
.big { position: relative; display: flex; flex-direction: column; align-items: center; color: #999; line-height: 9px; padding-top: 1px; }
.big span { white-space: pre; text-align: center; margin-top: 6px; }
.big .mark { position: absolute; right: 13px; top: 16px; font-style: normal; }
.live { color: #222; }
.mini { width: 4px; height: 2px; margin-top: 6px; color: #777; }
.tail { display: inline-block; width: 4px; height: 3px; margin-left: 2px; vertical-align: 2px; }
.stack { display: flex; flex-direction: column; align-items: flex-start; }
.row { display: flex; align-items: center; gap: 1px; height: 17px; color: #999; white-space: nowrap; }
.pair { display: grid; grid-template-rows: 26px 18px; justify-items: center; align-items: center; }
.r-outline { width: 70px; }
.r-outline .tools { grid-template-columns: 49px 16px; margin-left: 2px; }
.r-solver { width: 43px; }
.r-solver .tools, .r-insert .tools { grid-template-columns: 42px; }
.r-insert { width: 42px; }
.r-mesh { width: 85px; }
.r-mesh .tools { grid-template-columns: 40px 39px; margin-left: 2px; }
.r-preview { width: 105px; }
.r-preview .tools { grid-template-columns: 43px 54px; }
.r-controls { width: 418px; }
.r-controls .tools { grid-template-columns: 36px 33px 41px 40px 34px 37px 79px 57px 54px; margin-left: 5px; }
.r-edit { width: 409px; }
.r-edit .tools { grid-template-columns: 119px 33px 51px 58px 38px 34px 34px 32px; margin-left: 6px; }
.r-metrics { width: 44px; }
.r-metrics .tools { grid-template-columns: 43px; }

.workspace { flex: 1; display: grid; grid-template-columns: 192px minmax(0, 1fr); column-gap: 3px; }
.dock { display: grid; grid-template-rows: 3fr 2fr; }
.panel { padding-top: 1px; }
.phead { height: 16px; display: flex; align-items: center; gap: 3px; padding: 0 5px 0 4px; border: 1px solid #e2e2e2; border-left: 0; color: #333; }
.phead h2 { white-space: nowrap; }
.phead .caret { margin-right: 2px; color: #222; }
.grip { flex: 1; height: 4px; background: radial-gradient(circle, #c6c6c6 25%, transparent 30%) 0 0 / 3px 3px; }
.vgrip { flex: none; width: 5px; height: 14px; background: radial-gradient(circle, #bcbcbc 25%, transparent 30%) 0 0 / 3px 3px; }
.finder { display: flex; align-items: center; height: 20px; padding-left: 8px; }
.selectwrap { position: relative; width: 80px; margin-left: 4px; }
.selectwrap select { width: 100%; height: 16px; appearance: none; border: 1px solid #e2e2e2; background: #fff; padding: 0 3px; color: #333; }
.selectwrap .caret { position: absolute; right: 3px; top: 6px; color: #777; pointer-events: none; }
.finder input { width: 72px; height: 16px; border: 1px solid #e2e2e2; border-left: 0; padding: 0 3px; }
.more { margin-left: auto; margin-right: 2px; }
.more svg { width: 8px; height: 14px; }
.tree { position: relative; height: 218px; margin-top: 1px; display: flex; flex-direction: column; font-family: "DejaVu Sans Condensed", "Noto Sans", sans-serif; color: #222; }
.links { position: absolute; left: 0; top: 0; width: 190px; height: 218px; }
.node { position: relative; flex: 1; min-height: 0; display: flex; align-items: center; white-space: nowrap; }
.strong { font-weight: 700; color: #000; }
.node .kind { width: 12px; height: 12px; margin-right: 3px; }
.node .status { width: 9px; height: 10px; margin: 2px 0 0 -9px; }
.node .mark { position: absolute; left: 72px; bottom: 0; font: 6px/7px "Open Sans", sans-serif; }
.expander { display: block; width: 7px; height: 7px; }
.expander svg { width: 7px; height: 7px; }
.node .expander { position: absolute; }
.lv0 { padding-left: 8px; }
.lv1 { padding-left: 29px; }
.lv2 { padding-left: 51px; }
.lv3 { padding-left: 72px; }
.lv4 { padding-left: 94px; }
.lv1 .expander { left: 6px; }
.lv2 .expander { left: 28px; }
.lv3 .expander { left: 50px; }
.props { width: 100%; height: 174px; border-collapse: collapse; table-layout: fixed; }
.c-gut { width: 11px; }
.c-name { width: 81px; }
.props td, .props th { padding: 0 2px; height: 14px; border: 1px solid #c4c4c4; text-align: left; white-space: nowrap; font-weight: 400; color: #222; }
.props th { font-weight: 600; color: #000; }
.props .gut { border-width: 0 1px 0 0; }
.props .pvalue { background: #f7f6f3; }

.view { display: flex; flex-direction: column; min-width: 0; }
.viewbar { height: 21px; flex: none; display: flex; align-items: center; padding-left: 8px; color: #111; background: #fcfdfd; }
.set { display: flex; align-items: center; height: 18px; white-space: nowrap; }
.set button { flex: 1; height: 18px; display: flex; align-items: center; justify-content: center; gap: 2px; border: 1px solid transparent; }
.set .on { border-color: #6db5dc; background: #e2f2fb; }
.set .drop { justify-content: flex-start; gap: 2px; }
.w-zoom { width: 35px; margin-left: 5px; }
.w-shade { width: 54px; margin-left: 5px; }
.w-tree { width: 18px; margin-left: 4px; }
.w-rotate { width: 26px; margin-left: 4px; }
.w-zooms { width: 88px; }
.w-select { width: 26px; margin-left: 8px; }
.w-mode { width: 49px; margin-left: 3px; }
.w-filters { width: 194px; margin-left: 4px; }
.w-clip { width: 65px; margin-left: 6px; }
.w-empty { width: 42px; margin-left: 8px; }
.w-extend { width: 53px; margin-left: 7px; }
.w-selby { width: 61px; margin-left: 5px; }
.w-convert { width: 58px; margin-left: 6px; }
.overflow { align-self: flex-end; margin: 0 0 3px 4px; }

.canvas { position: relative; flex: 1; display: flex; flex-direction: column; align-items: center; padding-top: 94px; background: linear-gradient(#6f8be8 0%, #86a0ef 15%, #a4b9f7 35%, #c0cffc 53%, #dde7fe 69%, #f6fbff 82%, #fbfeff 100%); }
.plate { width: 347px; height: 347px; flex: none; background: #00d600; border: 1px dotted #a5f0b4; }
.scale { width: 347px; margin-top: 43px; color: #111; }
.ticks { position: relative; display: flex; height: 11px; }
.ticks span { width: 0; display: flex; justify-content: center; }
.ticks em { position: absolute; left: 100%; margin-left: 13px; font-style: normal; }
.ends { justify-content: space-between; }
.mids { justify-content: space-around; margin-top: 5px; }
.ruler { display: grid; grid-template-columns: repeat(4, 1fr); height: 11px; border: 1px solid #222; background: #fff; }
.ruler b { background: #000; }
.brand { position: absolute; right: 5px; top: 12px; color: #fff; text-align: right; display: flex; flex-direction: column; }
.brand strong { font: 700 31px/34px "Open Sans", sans-serif; }
.brand span { font: 700 14px/16px "Open Sans", sans-serif; }
.triad { position: absolute; right: -1px; bottom: 61px; width: 90px; height: 90px; }
.cursor { position: absolute; left: 198px; top: 275px; width: 10px; height: 16px; }

.statusbar { height: 16px; flex: none; display: flex; align-items: center; padding: 0 5px 0 4px; background: #0a84d0; color: #fff; }
.progress { width: 80px; height: 12px; background: #14d62a; border: 1px solid #bfeac5; }
.stop { width: 9px; height: 9px; margin-left: 7px; background: #e0101c; border: 1px solid #8f1c40; }
.msg { margin-left: 6px; }
.right { margin-left: auto; display: flex; gap: 10px; white-space: nowrap; }
.right span { display: flex; align-items: center; gap: 4px; }
.right .wide { margin-right: 5px; }
.units svg { width: 7px; height: 4px; }

.taskbar { height: 38px; flex: none; display: grid; grid-template-columns: 120px minmax(0, 845px) 1fr; align-items: center; padding-top: 1px; background: linear-gradient(90deg, #0c121a 0%, #0a101e 14%, #04103e 24%, #04093f 45%, #060d42 62%, #0a1230 70%, #0f141d 78%, #0e131b 100%); border-bottom: 1px solid #04060c; color: #fff; }
.widgets { padding-left: 15px; }
.apps { height: 34px; display: grid; grid-template-columns: repeat(24, minmax(0, 1fr)); }
.apps button { position: relative; display: flex; align-items: center; justify-content: center; }
.apps .current { background: #ffffff14; border-radius: 4px; }
.apps .idle::after, .apps .current::after { content: ""; position: absolute; bottom: 0; width: 4px; height: 2px; border-radius: 1px; background: #9aa0a8; }
.apps .current::after { width: 12px; background: #5fc0ee; }
.letter { position: absolute; display: flex; line-height: 10px; }
.letter b { font-weight: 700; }
.office { width: 11px; margin-right: 9px; justify-content: center; }
.foot { width: 20px; bottom: 6px; justify-content: center; font-size: 8px; line-height: 8px; }
.stairs { width: 20px; height: 18px; justify-content: center; color: #8c1c24; font-family: "Liberation Serif", serif; }
.stairs b:nth-child(2) { align-self: center; }
.stairs b:nth-child(3) { align-self: flex-end; }
.badge { position: absolute; right: 1px; top: 2px; min-width: 13px; height: 13px; padding: 0 2px; border-radius: 7px; background: #5cc4ee; color: #10283c; line-height: 13px; text-align: center; }
.tray { display: flex; align-items: center; justify-content: flex-end; gap: 12px; padding-right: 14px; font-size: 10px; line-height: 13px; white-space: nowrap; }
.lang { text-align: center; }
.clock { text-align: right; }
.sound { margin-left: -5px; }
.bell { margin-left: -6px; }
</style>
